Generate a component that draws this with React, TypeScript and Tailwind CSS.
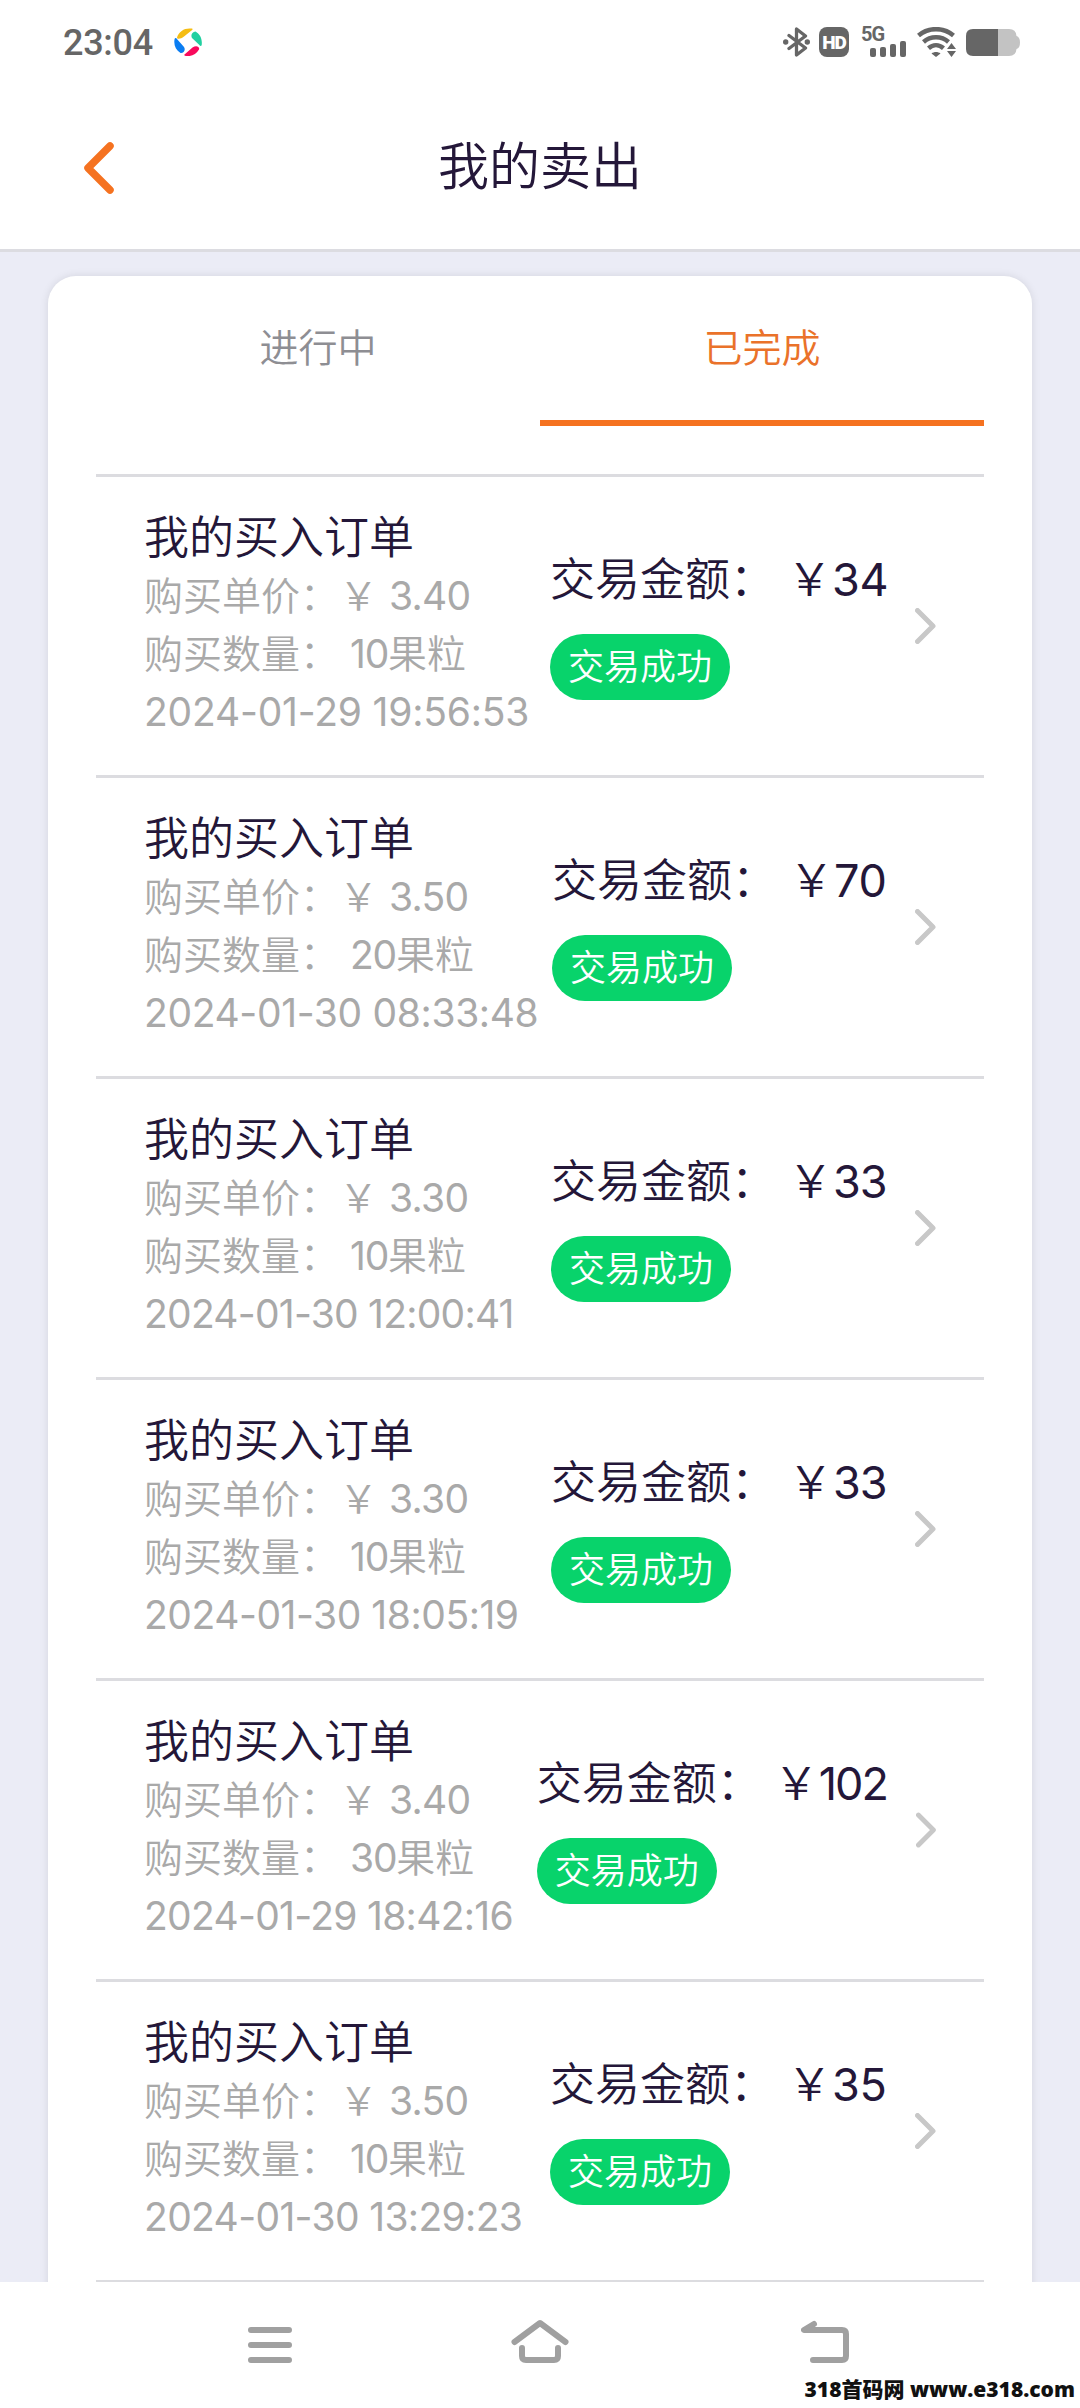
import clsx from 'clsx';

type Order = {
  price: string;
  quantity: string;
  time: string;
  timeTracking: string;
  amount: string;
  amountWidth: string;
  amountTracking: string;
};

const orders: Order[] = [
  {
    price: '3.40',
    quantity: '10',
    time: '2024-01-29 19:56:53',
    timeTracking: 'tracking-[-0.2px]',
    amount: '34',
    amountWidth: 'w-[339px]',
    amountTracking: 'tracking-[-0.4px]',
  },
  {
    price: '3.50',
    quantity: '20',
    time: '2024-01-30 08:33:48',
    timeTracking: 'tracking-[-0.35px]',
    amount: '70',
    amountWidth: 'w-[337px]',
    amountTracking: 'tracking-[-0.4px]',
  },
  {
    price: '3.30',
    quantity: '10',
    time: '2024-01-30 12:00:41',
    timeTracking: 'tracking-[-0.75px]',
    amount: '33',
    amountWidth: 'w-[338px]',
    amountTracking: 'tracking-[-1px]',
  },
  {
    price: '3.30',
    quantity: '10',
    time: '2024-01-30 18:05:19',
    timeTracking: 'tracking-[-0.45px]',
    amount: '33',
    amountWidth: 'w-[338px]',
    amountTracking: 'tracking-[-1px]',
  },
  {
    price: '3.40',
    quantity: '30',
    time: '2024-01-29 18:42:16',
    timeTracking: 'tracking-[-0.7px]',
    amount: '102',
    amountWidth: 'w-[353px]',
    amountTracking: 'tracking-[-2px]',
  },
  {
    price: '3.50',
    quantity: '10',
    time: '2024-01-30 13:29:23',
    timeTracking: 'tracking-[-0.65px]',
    amount: '35',
    amountWidth: 'w-[339px]',
    amountTracking: 'tracking-[-0.4px]',
  },
];

const tabs = [
  { label: '进行中', active: false },
  { label: '已完成', active: true },
];

const StatusBar = () => (
  <div className="flex h-[84px] items-center justify-between pr-[60px] pl-[63px] text-[#666666]">
    <div className="flex items-center">
      <span className="w-[111px] pt-[2px] font-[Roboto,sans-serif] text-[36px] leading-none font-medium tracking-[-0.3px]">
        23:04
      </span>
      <svg className="size-7" viewBox="0 0 28 28">
        <path d="M3 9.500C5 3 11-.5 18 .6 19 1 18.500 2 17.500 2.600L10 8.500C7 11 3 11.500 3 9.500Z" fill="#f5bd13" />
        <path d="M18 10C16.500 7 18 4 21.500 3.500 26 6 28.500 11 27.700 17 27.300 18.500 26 18 25.400 17Z" fill="#21d0a0" />
        <path d="M.6 11C.8 10 2 9.800 2.500 10.500L10 19C12 22 9.500 25.500 6.500 25 1.500 22 -.5 17 .6 11Z" fill="#0a7df2" />
        <path d="M10.500 26.500 18.500 19.500C22 17 26 18.500 25 21.500 22 27 16.500 29 11 27.700 10 27.500 10 27 10.500 26.500Z" fill="#f80a5c" />
      </svg>
    </div>
    <div className="flex items-center">
      <svg className="h-[30px] w-[27px]" viewBox="0 0 27 30" fill="none">
        <path
          d="M6 8.500 22.500 21 13.500 28V2L22.500 9 6 21.500"
          stroke="currentColor"
          strokeWidth="3.300"
          strokeLinecap="round"
          strokeLinejoin="round"
        />
        <circle cx="2.700" cy="15" r="2.700" fill="currentColor" />
        <circle cx="24.300" cy="15" r="2.700" fill="currentColor" />
      </svg>
      <span className="ml-[9px] flex size-[30px] items-center justify-center rounded-[8px] bg-[#666666] font-[Roboto,sans-serif] text-[19px] leading-none font-black tracking-[-1px] text-white">
        HD
      </span>
      <div className="ml-3 h-[30px] w-[45px]">
        <div className="h-[14px] font-[Roboto,sans-serif] text-[20px] leading-[15px] font-bold tracking-[-1px]">
          5G
        </div>
        <div className="flex h-[16px] items-end gap-1 pl-[9px]">
          <i className="h-[9px] w-[6px] rounded-[2px] bg-current" />
          <i className="h-[10px] w-[6px] rounded-[2px] bg-current" />
          <i className="h-[13px] w-[6px] rounded-[2px] bg-current" />
          <i className="h-[16px] w-[6px] rounded-[2px] bg-current" />
        </div>
      </div>
      <svg className="ml-[11px] h-[30px] w-[40px]" viewBox="0 0 40 30" fill="none">
        <g stroke="currentColor" strokeWidth="4.500">
          <path d="M1.500 8.500C11.500 0 26.500 0 36.500 8.500" />
          <path d="M6.500 15C13.500 8.800 24.500 8.800 31.500 15" />
          <path d="M11.500 21.300C16 17.300 22 17.300 26.500 21.300" />
        </g>
        <path d="M14.500 26.500C17 24.500 21 24.500 23.500 26.500L19 30Z" fill="currentColor" />
        <path
          d="M30 22 34.500 16 39 22ZM30 24H39L34.500 30Z"
          fill="currentColor"
          stroke="white"
          strokeWidth="1.500"
          paintOrder="stroke"
        />
      </svg>
      <svg className="ml-[9px] h-[27px] w-[54px]" viewBox="0 0 54 27">
        <path d="M32 0H43Q50 0 50.500 7Q54 8 54 13.500T50.500 20Q50 27 43 27H32Z" fill="#c3c3c3" />
        <path d="M32 0H7Q0 0 0 7V20Q0 27 7 27H32Z" fill="currentColor" />
      </svg>
    </div>
  </div>
);

const Header = () => (
  <header className="h-[252px] border-b-[3px] border-[#dcdce1] bg-white">
    <StatusBar />
    <div className="grid h-[165px] grid-cols-3 items-center px-[84px]">
      <svg className="mt-[2px] h-[52px] w-[30px]" viewBox="0 0 30 52" fill="none">
        <path
          d="M26 4 4 26 26 48"
          stroke="#f57220"
          strokeWidth="7.500"
          strokeLinecap="round"
          strokeLinejoin="round"
        />
      </svg>
      <h1 className="text-center text-[51px] leading-none text-[#241739]">我的卖出</h1>
    </div>
  </header>
);

const OrderRow = ({ order }: { order: Order }) => (
  <li className="flex h-[301px] items-center border-t-[3px] border-[#dcdce0] pl-12">
    <div className="w-[406px] pb-[6px] whitespace-pre">
      <h2 className="-mb-[2px] text-[45px] leading-[63px] text-[#241739]">我的买入订单</h2>
      <div className="text-[39px] leading-[58px] text-[#a9a9a9]">
        <p>
          购买单价：￥
          <span className="ml-[11px] font-normal tracking-[-0.7px]">{order.price}</span>
        </p>
        <p>
          购买数量：
          <span className="ml-[11px] font-normal tracking-[-1.2px]">{order.quantity}</span>果粒
        </p>
        <p className={clsx('font-normal', order.timeTracking)}>{order.time}</p>
      </div>
    </div>
    <div className="flex flex-1 justify-end pb-[5px]">
      <div className={order.amountWidth}>
        <p className="text-[45px] leading-[66px] whitespace-nowrap text-[#241739]">
          交易金额：<span className="ml-3">￥</span>
          <span className={clsx('font-normal', order.amountTracking)}>{order.amount}</span>
        </p>
        <span className="mt-[21px] flex h-[66px] w-[180px] items-center justify-center rounded-full bg-[#08d36b] pb-px text-[36px] leading-none text-white">
          交易成功
        </span>
      </div>
    </div>
    <svg className="mr-12 ml-[26px] h-[36px] w-[21px]" viewBox="0 0 21 36" fill="none">
      <path
        d="M2.500 2.500 18 18 2.500 33.500"
        stroke="#c8c8c8"
        strokeWidth="5"
        strokeLinecap="round"
        strokeLinejoin="round"
      />
    </svg>
  </li>
);

const NavBar = () => (
  <nav className="relative flex h-[126px] items-start bg-white pt-9 text-[#a0a0a0]">
    <svg
      className="ml-[247px] h-[48px] w-[46px]"
      viewBox="0 0 46 48"
      stroke="currentColor"
      strokeWidth="6"
      strokeLinecap="round"
    >
      <path d="M4 12H42M4 27H42M4 42H42" />
    </svg>
    <svg
      className="ml-[218px] h-[48px] w-[58px]"
      viewBox="0 0 58 48"
      fill="none"
      stroke="currentColor"
      strokeWidth="6"
      strokeLinecap="round"
      strokeLinejoin="round"
    >
      <path d="M3.500 24 29 5 54.500 24" />
      <path d="M11 30V38Q11 42 15 42H43Q47 42 47 38V30" />
    </svg>
    <svg
      className="ml-[232px] h-[48px] w-[48px]"
      viewBox="0 0 48 48"
      fill="none"
      stroke="currentColor"
      strokeWidth="6"
      strokeLinecap="round"
      strokeLinejoin="round"
    >
      <path d="M13 6 3 12H41Q45 12 45 16V38Q45 42 41 42H12" />
    </svg>
    <div className="absolute right-[5px] bottom-[4px] font-['Open_Sans','Noto_Sans_CJK_SC',sans-serif] text-[21px] leading-[30px] font-extrabold whitespace-nowrap text-[#111111]">
      318首码网 www.e318.com
    </div>
  </nav>
);

const App = () => (
  <div className="flex h-[2408px] w-[1080px] flex-col overflow-hidden bg-[#ebecf6] font-[Inter,'Noto_Sans_CJK_SC',sans-serif] font-[350]">
    <Header />
    <main className="flex-1 overflow-hidden px-12 pt-6">
      <div className="h-[2100px] rounded-t-[28px] bg-white px-12 shadow-[0_0_8px_rgba(0,0,0,0.1)]">
        <div className="flex h-[198px]">
          {tabs.map((tab) => (
            <button
              key={tab.label}
              type="button"
              className={clsx(
                'h-[150px] flex-1 border-b-[6px] text-[39px]',
                tab.active
                  ? 'border-[#f57220] text-[#ea722a]'
                  : 'border-transparent text-[#8e8e93]',
              )}
            >
              <span className="block pb-[7px] leading-[144px]">{tab.label}</span>
            </button>
          ))}
        </div>
        <ul>
          {orders.map((order) => (
            <OrderRow key={order.time} order={order} />
          ))}
        </ul>
        <div className="h-[3px] bg-[#dcdce0]" />
      </div>
    </main>
    <NavBar />
  </div>
);

export default App;
